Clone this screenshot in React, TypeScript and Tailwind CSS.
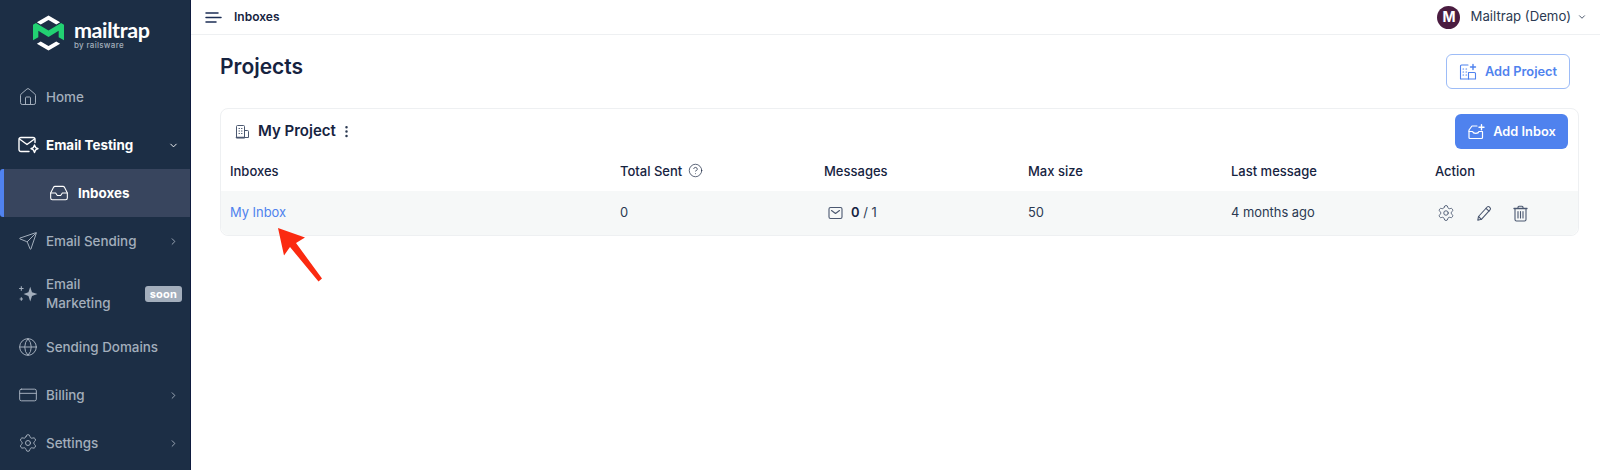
import { ReactNode } from "react";
import {
  ChevronDown,
  ChevronRight,
  CircleHelp,
  CreditCard,
  EllipsisVertical,
  Globe,
  House,
  Inbox,
  Settings,
  Send,
} from "lucide-react";

const stroke = {
  fill: "none",
  stroke: "currentColor",
  strokeLinecap: "round",
  strokeLinejoin: "round",
} as const;

const MailSpark = () => (
  <svg width="22" height="18" viewBox="0 0 22 18" strokeWidth="1.4" {...stroke}>
    <path d="M11 15.5H3a2 2 0 0 1-2-2v-10a2 2 0 0 1 2-2h12a2 2 0 0 1 2 2v3" />
    <path d="M1.5 3l7.5 5.5 7.5-5.5" />
    <path d="M16.5 9l1.2 2.6 2.3 1.1-2.3 1.1-1.2 2.7-1.2-2.7-2.3-1.1 2.3-1.1z" />
  </svg>
);

const Sparkles = () => (
  <svg width="20" height="20" viewBox="0 0 18 18" fill="currentColor">
    <path d="M11 2.5l1.6 5 4.9 1.6-4.9 1.6-1.6 5-1.6-5-4.4-1.6 4.4-1.6z" />
    <path d="M3 2v4M1 4h4M3 12v3M1.5 13.5h3" stroke="currentColor" strokeWidth="1" />
  </svg>
);

const BuildingSmall = () => (
  <svg width="15" height="15" viewBox="0 0 15 15" strokeWidth="1" {...stroke} className="text-[#4b5870]">
    <path d="M1.5 13.5v-11a1 1 0 0 1 1-1h6a1 1 0 0 1 1 1v11z" />
    <path d="M9.5 6.5h3a1 1 0 0 1 1 1v6h-4" />
    <path d="M4 4.5h.5M6.5 4.5H7M4 7h.5M6.5 7H7M4 9.5h.5M6.5 9.5H7" />
    <path d="M1.5 13.5h8" strokeWidth="1.6" />
  </svg>
);

const BuildingPlus = () => (
  <svg width="18" height="18" viewBox="0 0 18 18" strokeWidth="1.1" {...stroke} className="mr-[8px]">
    <path d="M9 2H2.5a1 1 0 0 0-1 1v13h8" />
    <path d="M9.5 9.5h6a1 1 0 0 1 1 1V16h-7z" />
    <path d="M4 6h.6M7 6h.6M4 9h.6M7 9h.6M4 12h.6M7 12h.6" />
    <path d="M14 1.5v5M11.5 4h5" strokeWidth="1.4" />
  </svg>
);

const InboxPlus = () => (
  <svg width="18" height="16" viewBox="0 0 18 16" strokeWidth="1.2" {...stroke} className="mr-[8px]">
    <path d="M10 2H5L2 6v7.5a1 1 0 0 0 1 1h11.500a1 1 0 0 0 1-1V8" />
    <path d="M2 7.500h3.500c.8 2.400 5.700 2.400 6.500 0h3.500" />
    <path d="M14.500 .8v5M12 3.300h5" strokeWidth="1.4" />
  </svg>
);

const MailBox = () => (
  <svg width="15" height="14" viewBox="0 0 15 14" strokeWidth="1.1" {...stroke} className="mr-[8px] text-[#4b5870]">
    <rect x="1" y="1.500" width="13" height="11" rx="1.500" />
    <path d="M3.500 4.500L7.500 7.500l4-3" />
  </svg>
);

const Gear = () => <Settings size={18} strokeWidth={1.2} />;

const PencilIcon = () => (
  <svg width="16" height="17" viewBox="0 0 16 17" strokeWidth="1.1" {...stroke}>
    <path d="M1.800 15.200l.7-3.700L11.200 2a1.500 1.500 0 0 1 2.200 0l.6.600a1.500 1.500 0 0 1 0 2.200L5.400 14.300z" />
    <path d="M2.500 11.500l2.900 2.800M10 3.300l3 2.800" />
  </svg>
);

const TrashIcon = () => (
  <svg width="15" height="17" viewBox="0 0 15 17" strokeWidth="1.1" {...stroke}>
    <path d="M1 3.500h13" strokeWidth="1.300" />
    <path d="M5 3.200V2.300a1 1 0 0 1 1-1h3a1 1 0 0 1 1 1v.9" />
    <path d="M2 3.500v11a1.500 1.500 0 0 0 1.500 1.500h8a1.500 1.500 0 0 0 1.500-1.500v-11" />
    <path d="M5 6.500v6.500M7.500 6.500v6.500M10 6.500v6.500" />
  </svg>
);

const Logo = () => (
  <svg width="31" height="36" viewBox="0 0 32 36" className="shrink-0">
    <path d="M16 0l12 6.800-4 2.400-8-4.500-8 4.500-4-2.400z" fill="#fff" />
    <path d="M16 36L4 29.200l4-2.400 8 4.500 8-4.500 4 2.400z" fill="#fff" />
    <path d="M0 9.500l3-1.700L16 15.500 29 7.800l3 1.700v16l-5.500-3V15.700L16 22 5.500 15.700v6.800l-5.500 3z" fill="#22d172" />
  </svg>
);

const NavRow = ({
  icon,
  label,
  chevron,
  muted = true,
}: {
  icon: ReactNode;
  label: string;
  chevron?: "right" | "down";
  muted?: boolean;
}) => (
  <div className={`flex h-12 items-center pl-[18px] pr-[8px] text-[13.4px] ${muted ? "font-medium text-[#a3aebc]" : "font-bold text-white"}`}>
    <span className="flex w-[28px] shrink-0">{icon}</span>
    <span className="flex-1">{label}</span>
    {chevron === "right" && <ChevronRight size={11} className="mr-[3px]" />}
    {chevron === "down" && <ChevronDown size={11} className="mr-[3px]" />}
  </div>
);

const Sidebar = () => (
  <aside className="flex h-[470px] w-[191px] shrink-0 flex-col border-r border-[#0f1c3f] bg-[#1c2e45]">
    <div className="flex h-[73px] items-start pl-[33px] pt-[15px]">
      <Logo />
      <div className="ml-[10px] flex flex-col pt-[4px]">
        <span className="font-['Lato',sans-serif] text-[21.5px] leading-[22px] font-bold tracking-[-0.4px] text-white">mailtrap</span>
        <span className="text-[8px] leading-[8px] font-medium tracking-[0.3px] text-[#a3aebc]">by railsware</span>
      </div>
    </div>
    <NavRow icon={<House size={20} strokeWidth={1.2} />} label="Home" />
    <NavRow icon={<MailSpark />} label="Email Testing" chevron="down" muted={false} />
    <div className="flex h-12 items-center rounded-l-[3px] border-l-4 border-[#5082ef] bg-[#38455e] pl-[45px] text-[13.4px] font-bold text-white">
      <Inbox size={20} strokeWidth={1.3} className="mr-[9px]" />
      Inboxes
    </div>
    <NavRow icon={<Send size={20} strokeWidth={1.2} />} label="Email Sending" chevron="right" />
    <div className="flex h-[58px] items-center pl-[18px] pr-[8px] text-[13.4px] font-medium text-[#a3aebc]">
      <span className="flex w-[28px] shrink-0">
        <Sparkles />
      </span>
      <span className="flex-1 leading-[19px]">
        Email
        <br />
        Marketing
      </span>
      <span className="rounded-[3px] bg-[#a3aebc] px-[5px] text-[11px] leading-[16px] font-bold tracking-[0.2px] text-white">soon</span>
    </div>
    <NavRow icon={<Globe size={20} strokeWidth={1.2} />} label="Sending Domains" />
    <NavRow icon={<CreditCard size={20} strokeWidth={1.2} />} label="Billing" chevron="right" />
    <NavRow icon={<Settings size={20} strokeWidth={1.2} />} label="Settings" chevron="right" />
  </aside>
);

const Topbar = () => (
  <header className="flex h-[35px] items-center justify-between border-b border-[#eef0f2] pl-[14px] pr-[13px]">
    <div className="flex items-center">
      <svg width="17" height="13" viewBox="0 0 17 13" stroke="#1c2e55" strokeWidth="1.5" strokeLinecap="round">
        <path d="M1 2h12M1 6.500h15M1 11h10" />
      </svg>
      <span className="ml-[12px] text-xs font-semibold text-[#16233f]">Inboxes</span>
    </div>
    <div className="flex items-center text-[13.2px] text-[#2b3a52]">
      <span className="mr-[10px] flex h-[23px] w-[23px] items-center justify-center rounded-full bg-[#4a1c40] text-sm font-bold text-white">M</span>
      Mailtrap (Demo)
      <ChevronDown size={10} className="ml-[6px]" />
    </div>
  </header>
);

const Th = ({ className, children }: { className: string; children: ReactNode }) => (
  <div className={`flex items-center text-[13px] font-medium text-[#16233f] ${className}`}>{children}</div>
);

const Td = ({ className, children }: { className: string; children: ReactNode }) => (
  <div className={`flex items-center text-[12.9px] text-[#2b3a52] ${className}`}>{children}</div>
);

const ProjectCard = () => (
  <section className="mt-[19px] rounded-lg border border-[#eef0f2]">
    <div className="flex items-center justify-between pl-[14px] pr-[10px] pt-[5px]">
      <div className="flex items-center">
        <BuildingSmall />
        <span className="ml-[8px] text-[15px] font-semibold text-[#16233f]">My Project</span>
        <EllipsisVertical size={15} strokeWidth={2} className="ml-[3px] text-[#2b3a52]" />
      </div>
      <button className="flex h-[35px] w-[113px] items-center justify-center rounded-md bg-[#4f82ee] text-[12.8px] font-semibold text-white">
        <InboxPlus />
        Add Inbox
      </button>
    </div>
    <div className="flex h-[42px] items-center pl-[9px] pt-[3px]">
      <Th className="w-[390px]">Inboxes</Th>
      <Th className="w-[204px]">
        Total Sent
        <CircleHelp size={15} strokeWidth={1.1} className="ml-[6px] -translate-y-[1px]" />
      </Th>
      <Th className="w-[204px]">Messages</Th>
      <Th className="w-[203px]">Max size</Th>
      <Th className="w-[204px]">Last message</Th>
      <Th className="w-[100px]">Action</Th>
    </div>
    <div className="flex h-[44px] items-center rounded-b-lg bg-[#f6f8f8] pl-[9px]">
      <Td className="w-[390px] text-[#4f82ee]">My Inbox</Td>
      <Td className="w-[204px]">0</Td>
      <Td className="w-[204px]">
        <span className="ml-[4px] flex">
          <MailBox />
        </span>
        <span className="font-semibold text-[#16233f]">0</span>
        <span>&nbsp;/ 1</span>
      </Td>
      <Td className="w-[203px]">50</Td>
      <Td className="w-[204px]">4 months ago</Td>
      <div className="flex w-[120px] items-center gap-[21px] pl-[2px] text-[#4b5870]">
        <Gear />
        <PencilIcon />
        <TrashIcon />
      </div>
    </div>
  </section>
);

export default function App() {
  return (
    <div className="flex h-[470px] w-[1600px] overflow-hidden bg-white font-['Inter',sans-serif]">
      <Sidebar />
      <main className="relative flex-1">
        <Topbar />
        <div className="pl-[29px] pr-[21px] pt-[19px]">
          <div className="flex items-start justify-between">
            <h1 className="-mt-[1px] text-[21px] leading-[28px] font-semibold text-[#16233f]">Projects</h1>
            <button className="mr-[9px] flex h-[35px] w-[124px] items-center justify-center rounded-md border border-[#9dbcf7] text-[12.8px] font-semibold text-[#4f82ee]">
              <BuildingPlus />
              Add Project
            </button>
          </div>
          <ProjectCard />
        </div>
        {/* red annotation arrow pointing at the inbox link */}
        <svg className="absolute left-[85px] top-[226px]" width="56" height="60" viewBox="0 0 56 60" fill="#fb2a10">
          <path d="M2 2l27 9.500-9 5.500L46 52.500l-3.500 3L14 21l-6 8.500z" />
        </svg>
      </main>
    </div>
  );
}
